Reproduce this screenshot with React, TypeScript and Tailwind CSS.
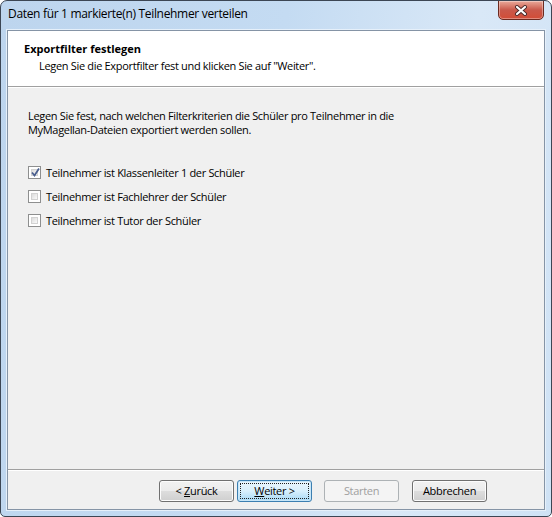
const ui = "font-['Open_Sans',sans-serif] tracking-[-0.32px]";

function CloseButton() {
  return (
    <div className="mt-[-1px] mr-[7px] flex h-[20px] w-[46px] items-center justify-center rounded-b-[5px] border border-[#6b2a20] bg-gradient-to-b from-[#e9a99a] via-[#c9584a] to-[#d24c36] shadow-[inset_0_0_0_1px_rgba(255,255,255,0.35)]">
      <svg width="14" height="11" viewBox="0 0 14 11">
        <path d="M3 2 L11 9 M11 2 L3 9" stroke="#4a2a2a" strokeWidth="4" strokeLinecap="round" />
        <path d="M3 2 L11 9 M11 2 L3 9" stroke="#ffffff" strokeWidth="2.2" strokeLinecap="round" />
      </svg>
    </div>
  );
}

function CheckBox({ checked }: { checked?: boolean }) {
  return (
    <div className="flex h-[13px] w-[13px] shrink-0 items-center justify-center border border-[#8e8f8f] bg-white p-[2px]">
      <div className="relative h-full w-full border border-[#d2d2d2] bg-gradient-to-br from-[#dcdcdc] to-[#fafafa]">
        {checked && (
          <svg className="absolute left-[-2px] top-[-3px]" width="11" height="11" viewBox="0 0 11 11">
            <path d="M2 5.5 L4.5 8.5 L9 1.5" fill="none" stroke="#4a5f8f" strokeWidth="1.8" />
          </svg>
        )}
      </div>
    </div>
  );
}

function Option({ label, checked }: { label: string; checked?: boolean }) {
  return (
    <div className="flex h-[13px] items-center gap-[5px]">
      <CheckBox checked={checked} />
      <span className="text-[11px] leading-[13px] text-black">{label}</span>
    </div>
  );
}

type BtnKind = "normal" | "default" | "disabled";

function WizButton({ kind = "normal", children }: { kind?: BtnKind; children: React.ReactNode }) {
  if (kind === "disabled") {
    return (
      <div className="flex h-[22px] w-[75px] items-center justify-center rounded-[3px] border border-[#adb2b5] bg-[#f4f4f4] text-[11px] text-[#a0a0a0]">
        <span>{children}</span>
      </div>
    );
  }
  if (kind === "default") {
    return (
      <div className="flex h-[22px] w-[75px] items-center justify-center rounded-[3px] border border-[#3c7fb1] bg-gradient-to-b from-[#eaf6fd] via-[#d9f0fc] to-[#a7d9f5] p-[2px] shadow-[inset_0_0_0_1px_#c8e6f8]">
        <div className="flex h-full w-full items-center justify-center border border-dotted border-[#222] text-[11px] text-black">
          <span>{children}</span>
        </div>
      </div>
    );
  }
  return (
    <div className="flex h-[22px] w-[75px] items-center justify-center rounded-[3px] border border-[#707070] bg-[linear-gradient(to_bottom,#f2f2f2_0%,#ebebeb_50%,#dddddd_51%,#cfcfcf_100%)] text-[11px] text-black shadow-[inset_0_0_0_1px_#fcfcfc]">
      <span>{children}</span>
    </div>
  );
}

export default function App() {
  const options = [
    { label: "Teilnehmer ist Klassenleiter 1 der Schüler", checked: true },
    { label: "Teilnehmer ist Fachlehrer der Schüler" },
    { label: "Teilnehmer ist Tutor der Schüler" },
  ];

  return (
    <div className={`${ui} flex h-[517px] w-[552px] flex-col overflow-hidden rounded-t-[7px] rounded-b-[5px] border border-[#3c4654] bg-[linear-gradient(100deg,#bdd5ee_0%,#c4dbf2_45%,#d9e8f7_75%,#cfe2f5_100%)]`}>
      {/* title bar */}
      <div className="flex h-[29px] shrink-0 items-start justify-between">
        <span className="pl-[7px] pt-[5px] text-[12px] leading-[16px] text-black">
          Daten für 1 markierte(n) Teilnehmer verteilen
        </span>
        <CloseButton />
      </div>

      {/* client area */}
      <div className="mx-[6px] mb-[6px] flex flex-1 flex-col border border-[#8594a6] bg-[#f0f0f0] shadow-[0_0_0_1px_#e6f0fa]">
        <div className="h-[56px] shrink-0 border-b border-[#a0a0a0] bg-white pl-[16px] pt-[10px]">
          <p className="text-[11px] font-bold leading-[15px] tracking-[0px] text-black">Exportfilter festlegen</p>
          <p className="pl-[15px] pt-[2px] text-[11px] leading-[15px] text-black">
            Legen Sie die Exportfilter fest und klicken Sie auf "Weiter".
          </p>
        </div>
        <div className="flex-1 border-t border-white pl-[20px] pt-[21px]">
          <p className="text-[11px] leading-[14px] text-black">
            Legen Sie fest, nach welchen Filterkriterien die Schüler pro Teilnehmer in die
            <br />
            MyMagellan-Dateien exportiert werden sollen.
          </p>
          <div className="mt-[29px] flex flex-col gap-[11px]">
            {options.map((o) => (
              <Option key={o.label} label={o.label} checked={o.checked} />
            ))}
          </div>
        </div>
        <div className="h-[40px] shrink-0 border-t border-[#a0a0a0]">
          <div className="flex h-full items-start border-t border-white pl-[151px] pt-[9px]">
            <WizButton>
              &lt; <u>Z</u>urück
            </WizButton>
            <div className="ml-[3px]">
              <WizButton kind="default">
                <u>W</u>eiter &gt;
              </WizButton>
            </div>
            <div className="ml-[12px]">
              <WizButton kind="disabled">Starten</WizButton>
            </div>
            <div className="ml-[13px]">
              <WizButton>Abbrechen</WizButton>
            </div>
          </div>
        </div>
      </div>
    </div>
  );
}
